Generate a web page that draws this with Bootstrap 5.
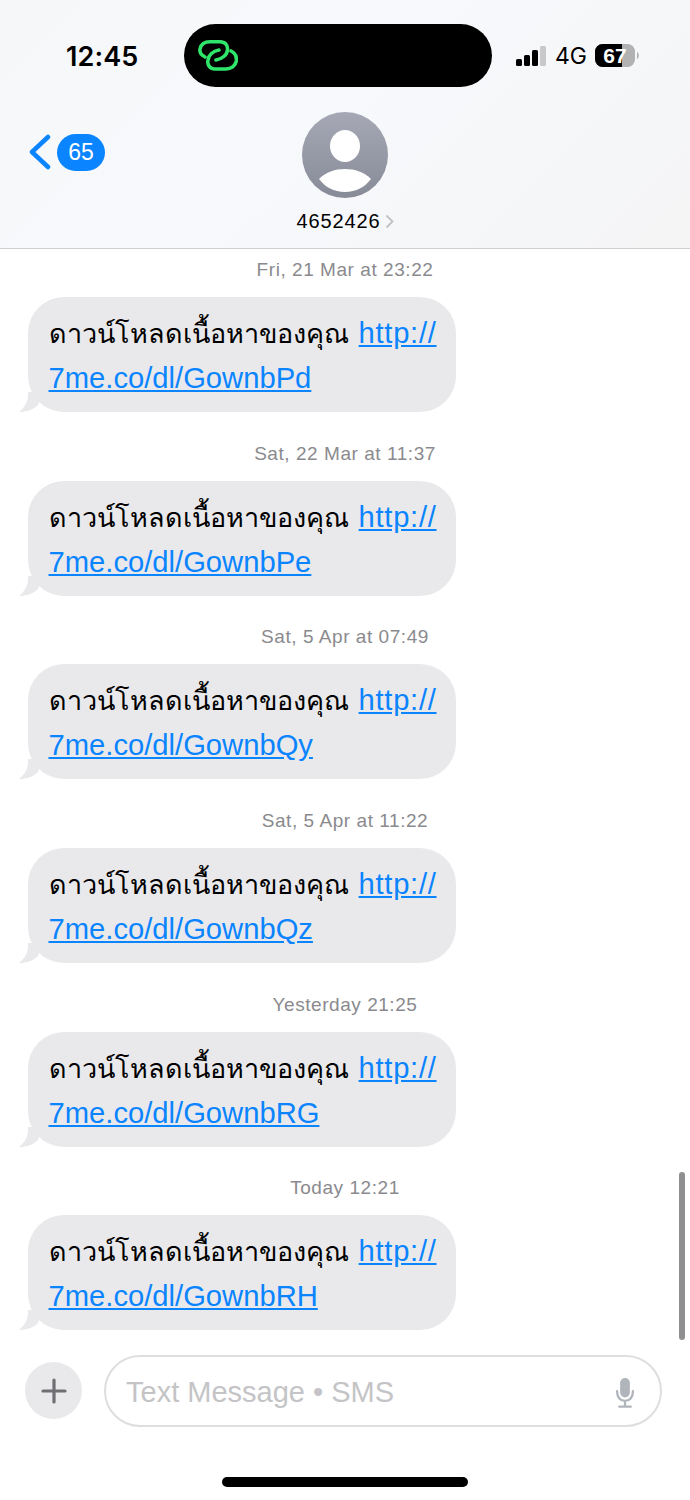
<!DOCTYPE html>
<html lang="en">
<head>
    <meta charset="UTF-8">
    <meta name="viewport" content="width=device-width, initial-scale=1.0">
    <title>Messages</title>
    <link rel="stylesheet" href="https://cdn.jsdelivr.net/npm/bootstrap@5.3.0/dist/css/bootstrap.min.css">
    <style>
      html, body { background: #fff; }
      body { font-family: "Liberation Sans", "Noto Sans", "DejaVu Sans", sans-serif; color: #000; }
      .phone { width: 690px; height: 1500px; overflow: hidden; position: relative; }
      .top-head { height: 249px; background: linear-gradient(135deg, #f6f7f8 0%, #f7f9fc 40%, #f5f5f6 100%); border-bottom: 1px solid #cfcfd2; }
      .status-row { height: 112px; padding: 24px 0 25px 66px; align-items: center; }
      .clock { width: 118px; flex: none; padding-top: 4px; font-family: "Inter", "Liberation Sans", sans-serif; font-size: 27px; font-weight: 600; letter-spacing: .1px; }
      .island { width: 308px; height: 63px; flex: none; background: #000; border-radius: 32px; padding-left: 14px; }
      .status-right { margin-left: 24px; gap: 8px; }
      .net { font-size: 23px; line-height: 1; padding-top: 2px; font-family: "Inter", "Liberation Sans", sans-serif; }
      .nav-grid { display: grid; grid-template-columns: 1fr auto 1fr; padding: 0 29px; }
      .count-pill { width: 48px; height: 37px; border-radius: 18.5px; background: #0a84ff; color: #fff; font-size: 23px; margin-left: 6px; }
      .back-col { height: 80px; }
      .contact-name { font-size: 20px; line-height: 24px; margin-top: 11px; letter-spacing: .9px; }
      .thread { padding-top: 10px; }
      .stamp { font-size: 19px; line-height: 22px; color: #8a8a8e; text-align: center; margin-bottom: 16px; letter-spacing: .55px; }
      .msg-group { margin-bottom: 30.7px; }
      .bubble-wrap { position: relative; margin-left: 28px; width: 428px; }
      .bubble-tail { position: absolute; left: -9px; bottom: 0; }
      .bubble { position: relative; height: 115px; background: #e9e9eb; border-radius: 36px; padding: 14px 0 0 20.5px; font-size: 29.2px; line-height: 44px; white-space: nowrap; }
      .bubble a { color: #0a84ff; }
      .thai-run { font-size: 27px; }
      .scheme-link { letter-spacing: .7px; margin-left: 2px; }
      .scroll-thumb { position: absolute; left: 679px; top: 1172px; width: 6px; height: 168px; border-radius: 3px; background: #8f8f92; }
      .composer { position: absolute; left: 25px; top: 1355px; width: 637px; gap: 22px; }
      .plus-btn { width: 57px; height: 57px; background: #e9e9eb; flex: none; margin-top: -1px; }
      .text-box { height: 72px; flex: 1; border: 2px solid #dedee0; border-radius: 36px; padding: 3px 25px 0 20px; font-size: 29px; color: #c4c4c6; }
      .home-bar { position: absolute; left: 222px; top: 1477px; width: 246px; height: 10px; border-radius: 5px; background: #000; }
    </style>
</head>
<body>
  <div class="phone">
    <div class="top-head">
      <div class="status-row d-flex">
        <div class="clock">12:45</div>
        <div class="island d-flex align-items-center">
          <svg width="40" height="31" viewBox="0 0 40 31" fill="none" stroke="#2fe66b" stroke-width="3.600" stroke-linecap="round">
            <path d="M7 17 C3 15 1.500 12 2 9 C3 4 7 1.800 12 1.800 H22 C27 1.800 30 5 29.500 10 C29 15 24 19 18 20"/>
            <path d="M33 11 C37 13 38.800 17 38.300 21 C37.500 26 33 29 28 29 H17 C12 29 9 25 10 20 C10.500 15 15 11 21 10"/>
          </svg>
        </div>
        <div class="status-right d-flex align-items-center">
          <svg width="31" height="20" viewBox="0 0 31 20"><rect x="0" y="13" width="6" height="7" rx="1.500"/><rect x="8" y="9" width="6" height="11" rx="1.500"/><rect x="16" y="4" width="6" height="16" rx="1.500"/><rect x="24" y="0" width="6" height="20" rx="1.500" fill="#c8c8ca"/></svg>
          <span class="net">4G</span>
          <svg width="46" height="23" viewBox="0 0 46 23"><rect x="0" y="0" width="40" height="23" rx="7.500" fill="#b2b2b2"/><path d="M7.500 0H27V23H7.500A7.500 7.500 0 0 1 0 15.500V7.500A7.500 7.500 0 0 1 7.500 0Z"/><path d="M42 8C44.500 9 44.500 14 42 15Z" fill="#b2b2b2"/><text x="20" y="19" text-anchor="middle" font-family="Liberation Sans" font-weight="700" font-size="21" fill="#fff">67</text></svg>
        </div>
      </div>
      <div class="nav-grid">
        <div class="back-col d-flex align-items-center">
          <svg width="22" height="36" viewBox="0 0 22 36" fill="none" stroke="#0a84ff" stroke-width="4.500" stroke-linecap="round" stroke-linejoin="round"><path d="M19 3 L3 18 L19 33"/></svg>
          <div class="count-pill d-flex align-items-center justify-content-center">65</div>
        </div>
        <div class="d-flex flex-column align-items-center">
          <svg width="86" height="86" viewBox="0 0 86 86">
            <defs>
              <linearGradient id="avatarFill" x1="0" y1="0" x2="0" y2="1"><stop offset="0" stop-color="#a6a9b5"/><stop offset="1" stop-color="#878b97"/></linearGradient>
            </defs>
            <circle cx="43" cy="43" r="43" fill="url(#avatarFill)"/>
            <ellipse cx="43" cy="34" rx="15" ry="16" fill="#fff"/>
            <path d="M17 67 C24 60 33 57 43 57 C53 57 62 60 69 67 C63 75 54 80 43 80 C32 80 23 75 17 67Z" fill="#fff"/>
          </svg>
          <div class="contact-name d-flex align-items-center gap-1">4652426
            <svg width="9" height="15" viewBox="0 0 9 15" fill="none" stroke="#c2c2c4" stroke-width="1.800"><path d="M1.500 1.500 L7.500 7.500 L1.500 13.500"/></svg>
          </div>
        </div>
        <div></div>
      </div>
    </div>

    <div class="thread" id="thread"></div>

    <div class="scroll-thumb"></div>

    <div class="composer d-flex align-items-center">
      <div class="plus-btn rounded-circle d-flex align-items-center justify-content-center">
        <svg width="26" height="26" viewBox="0 0 26 26" stroke="#6e6e73" stroke-width="3.200" stroke-linecap="round"><path d="M13 2V24M2 13H24"/></svg>
      </div>
      <div class="text-box d-flex align-items-center justify-content-between">
        <span>Text Message • SMS</span>
        <svg width="20" height="30" viewBox="0 0 22 34" fill="none"><rect x="5.500" y="0" width="11" height="22" rx="5.500" fill="#b0b4bb"/><path d="M2 15C2 22 6 26 11 26C16 26 20 22 20 15M11 26V32M4.500 32.500H17.500" stroke="#b0b4bb" stroke-width="2.600" stroke-linecap="round"/></svg>
      </div>
    </div>
    <div class="home-bar"></div>
  </div>

  <script src="https://cdn.jsdelivr.net/npm/bootstrap@5.3.0/dist/js/bootstrap.bundle.min.js"></script>
  <script>
    const messages = [
      ["Fri, 21 Mar at 23:22", "GownbPd"],
      ["Sat, 22 Mar at 11:37", "GownbPe"],
      ["Sat, 5 Apr at 07:49", "GownbQy"],
      ["Sat, 5 Apr at 11:22", "GownbQz"],
      ["Yesterday 21:25", "GownbRG"],
      ["Today 12:21", "GownbRH"]
    ];
    document.getElementById("thread").innerHTML = messages.map(([when, code]) => `
      <div class="msg-group">
        <div class="stamp">${when}</div>
        <div class="bubble-wrap">
          <div class="bubble"><span class="thai-run">ดาวน์โหลดเนื้อหาของคุณ</span> <a class="scheme-link" href="#">http://</a><br><a href="#">7me.co/dl/${code}</a></div>
          <svg class="bubble-tail" width="24" height="20" viewBox="0 0 24 20"><path d="M9 3 C9 10 5 16 0 20 C7 20 14 18 19 13 L24 0 H9Z" fill="#e9e9eb"/></svg>
        </div>
      </div>`).join("");
  </script>
</body>
</html>
